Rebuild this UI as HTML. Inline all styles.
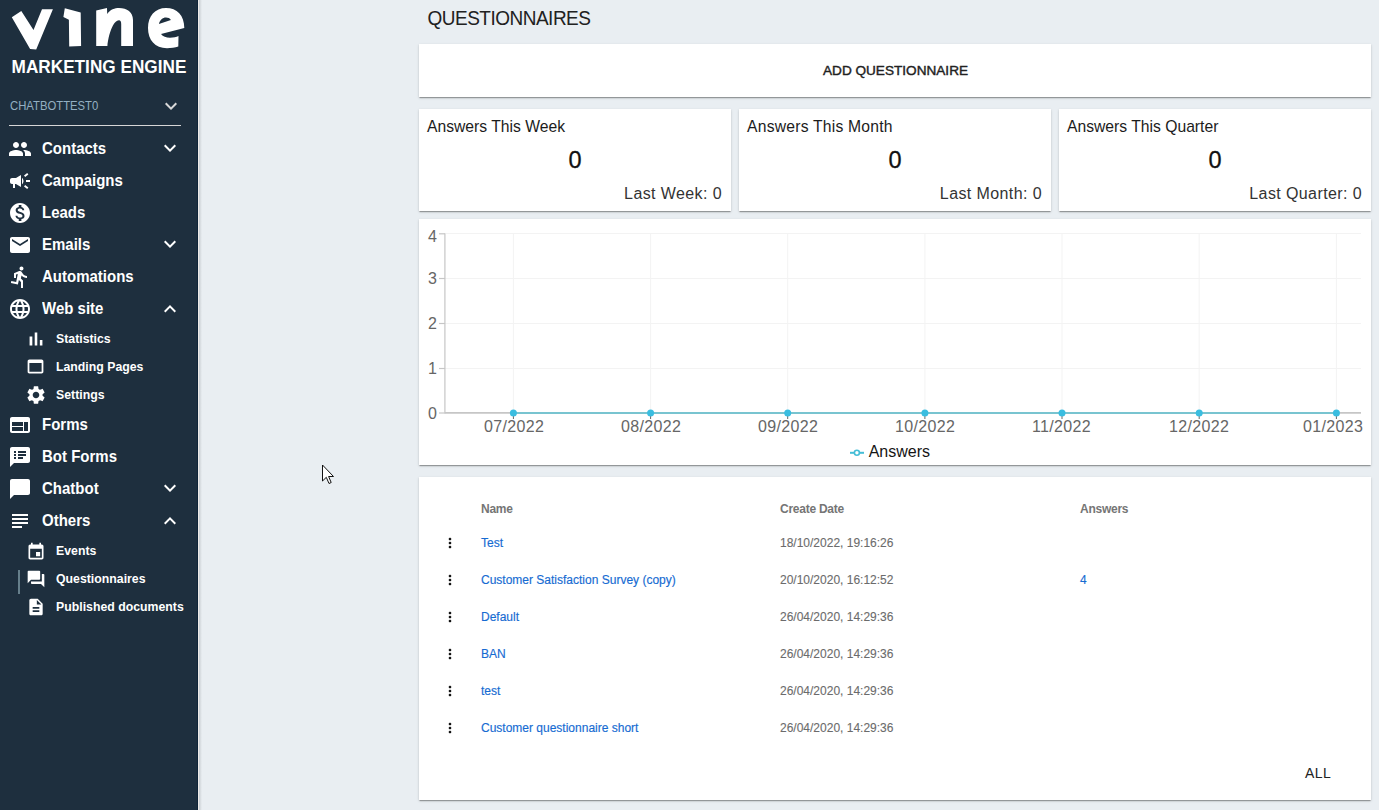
<!DOCTYPE html>
<html><head><meta charset="utf-8">
<style>
*{box-sizing:border-box;margin:0;padding:0}
html,body{width:1379px;height:810px;overflow:hidden;background:#e9eef2;font-family:"Liberation Sans",sans-serif}
.abs{position:absolute}
.t{position:absolute;white-space:nowrap;line-height:1}
#side{position:absolute;left:0;top:0;width:197px;height:810px;background:#1e2f3e}
#sideedge{position:absolute;left:197px;top:0;width:1px;height:810px;background:#0f2438}
#sideedge2{position:absolute;left:198px;top:0;width:1px;height:810px;background:#eeeae6}
#sideshadow{position:absolute;left:199px;top:0;width:3px;height:810px;background:linear-gradient(to right,#c9ced2,#e9eef2)}
.mi{position:absolute;left:42px;color:#fff;font-weight:bold;font-size:15px;transform:scaleY(1.15);transform-origin:0 12.7px}
.si{position:absolute;left:56px;color:#fff;font-weight:bold;font-size:12.3px;transform:scaleY(1.09);transform-origin:0 10.4px}
.ic{position:absolute;fill:#fff}
.card{position:absolute;background:#fff;border-radius:0;box-shadow:0px 2px 1px -1px rgba(0,0,0,0.2),0px 1px 1px 0px rgba(0,0,0,0.14),0px 1px 3px 0px rgba(0,0,0,0.12)}
.st{color:#1c1c1c;font-size:16px}
.big{color:#111;font-size:23.5px;-webkit-text-stroke:0.3px #111}
.lw{color:#333;font-size:16px;letter-spacing:0.4px}
.th{color:#757575;font-weight:bold;font-size:12px;letter-spacing:-0.25px}
.lk{color:#166bd2;font-size:12px;-webkit-text-stroke:0.15px #166bd2}
.dt{color:#6b6b6b;font-size:12px;-webkit-text-stroke:0.1px #6b6b6b}
.yl{color:#666;font-size:16px}
.xl{color:#666;font-size:16px;letter-spacing:0.35px}
</style></head><body>
<div id="side">
  <!-- logo -->
  <svg class="abs" style="left:0;top:0" width="197" height="55" viewBox="0 0 197 55">
    <path fill="#fff" d="M11.8 17.3 L21.3 10.9 L33.5 29.9 L42 9.2 L52.9 9.2 L36.2 49.6 L30.1 48.9 Z"/>
    <path fill="#fff" d="M64.8 8.2 L80.7 12.6 L81.1 45.9 L69.2 46.5 L68.9 19.7 L63.4 17 Z"/>
    <path fill="#fff" d="M96.2 10.5 L107 8 L107.2 14 C110 9.5 115 8 119 8 C127 8 133 12 133 20 L133 46 L121.2 46 L121.2 24 C121.2 21.5 120.5 20.3 119 20.3 C113 20.3 108.5 35 107.4 46 L96.2 46 Z"/>
    <path fill="#fff" d="M148 28 C148 16 155 8 166 8 C177 8 184.3 15 184.3 28 L161 34 C163 36.5 166 37.7 170 37.7 C173.5 37.7 176.5 37 178.5 36 L178.3 46.5 C175 47.8 171 48.2 167 48.2 C155 48.2 148 40 148 28 Z M158.9 23.9 L170.9 20 C169.8 18 168 17.4 166 17.4 C162.5 17.4 160 20 158.9 23.9 Z"/>
  </svg>
  <div class="t" style="left:11.6px;top:59.2px;color:#fff;font-weight:bold;font-size:17.2px;transform:scaleY(1.06);transform-origin:0 100%">MARKETING ENGINE</div>
  <div class="t" style="left:10px;top:101px;color:#94afc2;font-size:11.3px;transform:scaleY(1.1);transform-origin:0 9.6px">CHATBOTTEST0</div>
  <svg class="ic" style="left:159px;top:94px;fill:#d9d9d9" width="24" height="24" viewBox="0 0 24 24"><path d="M16.59 8.59L12 13.17 7.41 8.59 6 10l6 6 6-6z"/></svg>
  <div class="abs" style="left:9px;top:125px;width:172px;height:1px;background:#d6d6d6"></div>

  <!-- main items -->
  <svg class="ic" style="left:8px;top:137px" width="24" height="24" viewBox="0 0 24 24"><path d="M16 11c1.66 0 2.99-1.34 2.99-3S17.66 5 16 5c-1.66 0-3 1.34-3 3s1.34 3 3 3zm-8 0c1.66 0 2.99-1.34 2.99-3S9.66 5 8 5C6.34 5 5 6.34 5 8s1.34 3 3 3zm0 2c-2.33 0-7 1.17-7 3.5V19h14v-2.5c0-2.330-4.67-3.5-7-3.5zm8 0c-.29 0-.62.02-.97.05 1.16.84 1.97 1.97 1.97 3.45V19h6v-2.5c0-2.33-4.67-3.5-7-3.5z"/></svg>
  <div class="t mi" style="top:141px">Contacts</div>
  <svg class="ic" style="left:158px;top:136px" width="24" height="24" viewBox="0 0 24 24"><path d="M16.59 8.59L12 13.17 7.41 8.59 6 10l6 6 6-6z"/></svg>

  <svg class="ic" style="left:8px;top:169px" width="24" height="24" viewBox="0 0 24 24"><path d="M18 11v2h4v-2h-4zm-2 6.61c.96.71 2.21 1.65 3.2 2.39.4-.53.8-1.07 1.2-1.6-.99-.74-2.24-1.68-3.2-2.4-.4.54-.8 1.08-1.2 1.61zM20.4 5.6c-.4-.53-.8-1.070-1.2-1.6-.99.74-2.24 1.68-3.2 2.4.4.53.8 1.07 1.2 1.6.96-.72 2.21-1.65 3.2-2.4zM4 9c-1.1 0-2 .9-2 2v2c0 1.1.9 2 2 2h1v4h2v-4h1l5 3V6L8 9H4zm11.5 3c0-1.33-.58-2.53-1.5-3.35v6.69c.92-.81 1.5-2.010 1.5-3.34z"/></svg>
  <div class="t mi" style="top:173px">Campaigns</div>

  <svg class="ic" style="left:8px;top:201px" width="24" height="24" viewBox="0 0 24 24"><path d="M12 2C6.48 2 2 6.48 2 12s4.48 10 10 10 10-4.48 10-10S17.52 2 12 2zm1.41 16.09V20h-2.67v-1.93c-1.71-.36-3.16-1.46-3.27-3.4h1.96c.1 1.05.82 1.87 2.650 1.87 1.96 0 2.4-.98 2.4-1.59 0-.83-.44-1.61-2.67-2.14-2.48-.6-4.18-1.62-4.18-3.67 0-1.72 1.39-2.84 3.11-3.21V4h2.67v1.95c1.86.45 2.79 1.86 2.85 3.39H14.3c-.05-1.11-.64-1.87-2.22-1.87-1.5 0-2.4.68-2.4 1.64 0 .84.65 1.39 2.67 1.91s4.18 1.39 4.18 3.91c-.01 1.83-1.38 2.83-3.12 3.16z"/></svg>
  <div class="t mi" style="top:205px">Leads</div>

  <svg class="ic" style="left:8px;top:233px" width="24" height="24" viewBox="0 0 24 24"><path d="M20 4H4c-1.1 0-1.99.9-1.99 2L2 18c0 1.1.9 2 2 2h16c1.1 0 2-.9 2-2V6c0-1.1-.9-2-2-2zm0 4l-8 5-8-5V6l8 5 8-5v2z"/></svg>
  <div class="t mi" style="top:237px">Emails</div>
  <svg class="ic" style="left:158px;top:232px" width="24" height="24" viewBox="0 0 24 24"><path d="M16.59 8.59L12 13.17 7.41 8.59 6 10l6 6 6-6z"/></svg>

  <svg class="ic" style="left:8px;top:265px" width="24" height="24" viewBox="0 0 24 24"><path d="M13.49 5.48c1.1 0 2-.9 2-2s-.9-2-2-2-2 .9-2 2 .9 2 2 2zm-3.6 13.9l1-4.4 2.1 2v6h2v-7.5l-2.1-2 .6-3c1.3 1.5 3.3 2.5 5.5 2.5v-2c-1.9 0-3.5-1-4.3-2.4l-1-1.6c-.4-.6-1-1-1.7-1-.3 0-.5.1-.8.1l-5.2 2.2v4.7h2v-3.4l1.8-.7-1.6 8.1-4.9-1-.4 2 7 1.4z"/></svg>
  <div class="t mi" style="top:269px">Automations</div>

  <svg class="ic" style="left:8px;top:297px" width="24" height="24" viewBox="0 0 24 24"><path d="M11.99 2C6.47 2 2 6.48 2 12s4.47 10 9.99 10C17.52 22 22 17.52 22 12S17.52 2 11.99 2zm6.93 6h-2.95c-.32-1.25-.78-2.45-1.38-3.56 1.84.63 3.37 1.91 4.33 3.56zM12 4.04c.83 1.2 1.48 2.53 1.91 3.96h-3.82c.43-1.43 1.08-2.76 1.91-3.96zM4.26 14C4.1 13.36 4 12.69 4 12s.1-1.36.26-2h3.38c-.08.66-.14 1.32-.14 2 0 .68.06 1.34.14 2H4.26zm.82 2h2.95c.32 1.25.78 2.45 1.38 3.56-1.84-.63-3.37-1.9-4.33-3.56zm2.95-8H5.08c.96-1.66 2.49-2.93 4.33-3.56C8.81 5.55 8.35 6.75 8.03 8zM12 19.96c-.83-1.2-1.48-2.53-1.91-3.96h3.82c-.43 1.43-1.08 2.76-1.91 3.96zM14.34 14H9.66c-.09-.66-.16-1.32-.16-2 0-.68.07-1.35.16-2h4.68c.09.65.16 1.32.16 2 0 .68-.07 1.34-.16 2zm.25 5.56c.6-1.11 1.06-2.31 1.38-3.56h2.95c-.96 1.65-2.49 2.93-4.33 3.56zM16.36 14c.08-.66.14-1.32.14-2 0-.68-.06-1.34-.14-2h3.38c.16.64.26 1.31.26 2s-.1 1.36-.26 2h-3.38z"/></svg>
  <div class="t mi" style="top:301px">Web site</div>
  <svg class="ic" style="left:158px;top:297px" width="24" height="24" viewBox="0 0 24 24"><path d="M12 8l-6 6 1.41 1.41L12 10.83l4.59 4.58L18 14z"/></svg>

  <svg class="ic" style="left:25px;top:328px" width="22" height="22" viewBox="0 0 24 24"><path d="M5 9.2h3V19H5zM10.6 5h2.8v14h-2.8zm5.6 8H19v6h-2.8z"/></svg>
  <div class="t si" style="top:333px">Statistics</div>
  <svg class="ic" style="left:25px;top:356px" width="21" height="21" viewBox="0 0 24 24"><path d="M19 4H5c-1.11 0-2 .9-2 2v12c0 1.1.89 2 2 2h14c1.1 0 2-.9 2-2V6c0-1.1-.89-2-2-2zm0 14H5V8h14v10z"/></svg>
  <div class="t si" style="top:361px">Landing Pages</div>
  <svg class="ic" style="left:25px;top:384px" width="22" height="22" viewBox="0 0 24 24"><path d="M19.14 12.94c.04-.3.06-.61.06-.94 0-.32-.02-.64-.07-.94l2.03-1.58c.18-.14.23-.41.12-.61l-1.92-3.32c-.12-.22-.37-.29-.59-.22l-2.39.96c-.5-.38-1.03-.7-1.62-.94l-.36-2.54c-.04-.24-.24-.41-.48-.41h-3.84c-.24 0-.43.17-.47.41l-.36 2.54c-.59.24-1.13.57-1.62.94l-2.39-.96c-.22-.08-.47 0-.59.22L2.74 8.870c-.12.21-.08.47.12.61l2.03 1.58c-.05.3-.09.63-.09.94s.02.64.07.94l-2.03 1.58c-.18.14-.23.41-.12.61l1.92 3.32c.12.22.37.29.59.22l2.39-.96c.5.38 1.03.7 1.62.94l.36 2.54c.05.24.24.41.48.41h3.84c.24 0 .44-.17.47-.41l.36-2.54c.59-.24 1.13-.56 1.62-.94l2.39.96c.22.08.47 0 .59-.22l1.92-3.32c.12-.22.07-.47-.12-.61l-2.01-1.58zM12 15.6c-1.98 0-3.6-1.62-3.6-3.6s1.62-3.6 3.6-3.6 3.6 1.62 3.6 3.6-1.62 3.6-3.6 3.6z"/></svg>
  <div class="t si" style="top:389px">Settings</div>

  <svg class="ic" style="left:8px;top:413px" width="24" height="24" viewBox="0 0 24 24"><path d="M20 4H4c-1.1 0-1.99.9-1.99 2L2 18c0 1.1.9 2 2 2h16c1.1 0 2-.9 2-2V6c0-1.1-.9-2-2-2zm-5 14H4v-4h11v4zm0-5H4V9h11v4zm5 5h-4V9h4v9z"/></svg>
  <div class="t mi" style="top:417px">Forms</div>
  <svg class="ic" style="left:8px;top:445px" width="24" height="24" viewBox="0 0 24 24"><path d="M20 2H4c-1.1 0-1.99.9-1.99 2L2 22l4-4h14c1.1 0 2-.9 2-2V4c0-1.1-.9-2-2-2zM8 14H6v-2h2v2zm0-3H6V9h2v2zm0-3H6V6h2v2zm7 6h-5v-2h5v2zm3-3h-8V9h8v2zm0-3h-8V6h8v2z"/></svg>
  <div class="t mi" style="top:449px">Bot Forms</div>
  <svg class="ic" style="left:8px;top:477px" width="24" height="24" viewBox="0 0 24 24"><path d="M20 2H4c-1.1 0-2 .9-2 2v18l4-4h14c1.1 0 2-.9 2-2V4c0-1.1-.9-2-2-2z"/></svg>
  <div class="t mi" style="top:481px">Chatbot</div>
  <svg class="ic" style="left:158px;top:476px" width="24" height="24" viewBox="0 0 24 24"><path d="M16.59 8.59L12 13.17 7.41 8.59 6 10l6 6 6-6z"/></svg>
  <svg class="ic" style="left:8px;top:509px" width="24" height="24" viewBox="0 0 24 24"><path d="M14 17H4v2h10v-2zm6-8H4v2h16V9zM4 15h16v-2H4v2zM4 5v2h16V5H4z"/></svg>
  <div class="t mi" style="top:513px">Others</div>
  <svg class="ic" style="left:158px;top:509px" width="24" height="24" viewBox="0 0 24 24"><path d="M12 8l-6 6 1.41 1.41L12 10.83l4.59 4.58L18 14z"/></svg>

  <svg class="ic" style="left:26.2px;top:541.5px" width="20" height="20" viewBox="0 0 24 24"><path d="M17 12h-5v5h5v-5zM16 1v2H8V1H6v2H5c-1.11 0-1.99.9-1.99 2L3 19c0 1.1.89 2 2 2h14c1.1 0 2-.9 2-2V5c0-1.1-.9-2-2-2h-1V1h-2zm3 18H5V8h14v11z"/></svg>
  <div class="t si" style="top:545px">Events</div>
  <div class="abs" style="left:18px;top:570px;width:2px;height:24px;background:#667f8b"></div>
  <svg class="ic" style="left:25.9px;top:569px" width="20" height="20" viewBox="0 0 24 24"><path d="M21 6h-2v9H6v2c0 .55.45 1 1 1h11l4 4V7c0-.55-.45-1-1-1zm-4 6V3c0-.55-.45-1-1-1H3c-.55 0-1 .45-1 1v14l4-4h10c.55 0 1-.45 1-1z"/></svg>
  <div class="t si" style="top:573px">Questionnaires</div>
  <svg class="ic" style="left:26.2px;top:597.2px" width="20" height="20" viewBox="0 0 24 24"><path d="M14 2H6c-1.1 0-1.99.9-1.99 2L4 20c0 1.1.89 2 1.99 2H18c1.1 0 2-.9 2-2V8l-6-6zm2 16H8v-2h8v2zm0-4H8v-2h8v2zm-3-5V3.5L18.5 9H13z"/></svg>
  <div class="t si" style="top:601px">Published documents</div>
</div>
<div id="sideedge"></div><div id="sideedge2"></div><div id="sideshadow"></div>

<!-- main -->
<div class="t" style="left:427.5px;top:8.6px;color:#212121;font-size:19px;letter-spacing:-0.5px;transform:scaleY(1.05);transform-origin:0 16.1px">QUESTIONNAIRES</div>

<div class="card" style="left:419px;top:44px;width:952px;height:53px"></div>
<div class="t" style="left:823px;top:64.1px;color:#212121;font-size:13.6px;-webkit-text-stroke:0.4px #212121">ADD QUESTIONNAIRE</div>

<div class="card" style="left:419px;top:109px;width:312px;height:102px"></div>
<div class="card" style="left:739px;top:109px;width:312px;height:102px"></div>
<div class="card" style="left:1059px;top:109px;width:312px;height:102px"></div>
<div class="t st" style="left:427px;top:119px;font-size:15.7px">Answers This Week</div>
<div class="t st" style="left:747px;top:119px;font-size:15.7px;letter-spacing:0.22px">Answers This Month</div>
<div class="t st" style="left:1067px;top:119px;font-size:15.7px">Answers This Quarter</div>
<div class="t big" style="left:568.5px;top:149.1px">0</div>
<div class="t big" style="left:888.5px;top:149.1px">0</div>
<div class="t big" style="left:1208.5px;top:149.1px">0</div>
<div class="t lw" style="right:657px;top:186px">Last Week: 0</div>
<div class="t lw" style="right:337px;top:186px">Last Month: 0</div>
<div class="t lw" style="right:17px;top:186px">Last Quarter: 0</div>

<div class="card" style="left:419px;top:219px;width:952px;height:246px"></div>
<svg class="abs" style="left:0;top:0" width="1379" height="810">
  <g stroke="#f3f3f3" stroke-width="1">
    <line x1="445" y1="233.5" x2="1361" y2="233.5"/>
    <line x1="445" y1="278.5" x2="1361" y2="278.5"/>
    <line x1="445" y1="323.5" x2="1361" y2="323.5"/>
    <line x1="445" y1="368.5" x2="1361" y2="368.5"/>
    <line x1="513.4" y1="233" x2="513.4" y2="413"/>
    <line x1="650.6" y1="233" x2="650.6" y2="413"/>
    <line x1="787.7" y1="233" x2="787.7" y2="413"/>
    <line x1="924.9" y1="233" x2="924.9" y2="413"/>
    <line x1="1062.0" y1="233" x2="1062.0" y2="413"/>
    <line x1="1199.2" y1="233" x2="1199.2" y2="413"/>
    <line x1="1336.4" y1="233" x2="1336.4" y2="413"/>
  </g>
  <g stroke="#c6c6c6" stroke-width="1.2">
    <line x1="444.9" y1="233.5" x2="444.9" y2="413.5"/>
    <line x1="445" y1="412.9" x2="1361" y2="412.9" stroke-width="1.6"/>
    <line x1="439" y1="233.8" x2="445" y2="233.8"/>
    <line x1="439" y1="278.5" x2="445" y2="278.5"/>
    <line x1="439" y1="323.5" x2="445" y2="323.5"/>
    <line x1="439" y1="368.5" x2="445" y2="368.5"/>
    <line x1="439" y1="413" x2="445" y2="413"/>
  </g>
  <g stroke="#666" stroke-width="1">
    <line x1="513.4" y1="413" x2="513.4" y2="419"/><line x1="650.6" y1="413" x2="650.6" y2="419"/><line x1="787.7" y1="413" x2="787.7" y2="419"/><line x1="924.9" y1="413" x2="924.9" y2="419"/><line x1="1062.0" y1="413" x2="1062.0" y2="419"/><line x1="1199.2" y1="413" x2="1199.2" y2="419"/><line x1="1336.4" y1="413" x2="1336.4" y2="419"/>
  </g>
  <line x1="513.4" y1="413" x2="1336.4" y2="413" stroke="#78c4d0" stroke-width="1.9"/>
  <g fill="#3abde0">
    <circle cx="513.4" cy="413" r="3.5"/><circle cx="650.6" cy="413" r="3.5"/><circle cx="787.7" cy="413" r="3.5"/><circle cx="924.9" cy="413" r="3.5"/><circle cx="1062.0" cy="413" r="3.5"/><circle cx="1199.2" cy="413" r="3.5"/><circle cx="1336.4" cy="413" r="3.5"/>
  </g>
  <line x1="850" y1="452.8" x2="864" y2="452.8" stroke="#45bdd6" stroke-width="2"/>
  <circle cx="856.9" cy="452.8" r="2.5" fill="#fff" stroke="#45bdd6" stroke-width="1.6"/>
</svg>
<div class="t yl" style="left:428px;top:229px">4</div>
<div class="t yl" style="left:428px;top:271px">3</div>
<div class="t yl" style="left:428px;top:316px">2</div>
<div class="t yl" style="left:428px;top:361px">1</div>
<div class="t yl" style="left:428px;top:406px">0</div>
<div class="t xl" style="left:484px;top:419px">07/2022</div>
<div class="t xl" style="left:621px;top:419px">08/2022</div>
<div class="t xl" style="left:758px;top:419px">09/2022</div>
<div class="t xl" style="left:895px;top:419px">10/2022</div>
<div class="t xl" style="left:1032px;top:419px">11/2022</div>
<div class="t xl" style="left:1169px;top:419px">12/2022</div>
<div class="t xl" style="left:1303px;top:419px">01/2023</div>
<div class="t" style="left:868.7px;top:444px;color:#151515;font-size:16px">Answers</div>

<div class="card" style="left:419px;top:477px;width:952px;height:323px"></div>
<div class="t th" style="left:481px;top:503px">Name</div>
<div class="t th" style="left:780px;top:503px">Create Date</div>
<div class="t th" style="left:1080px;top:503px">Answers</div>

<svg class="abs" style="left:442px;top:534.8px" width="16" height="16" viewBox="0 0 24 24"><path fill="#111" d="M12 8c1.1 0 2-.9 2-2s-.9-2-2-2-2 .9-2 2 .9 2 2 2zm0 2c-1.1 0-2 .9-2 2s.9 2 2 2 2-.9 2-2-.9-2-2-2zm0 6c-1.1 0-2 .9-2 2s.9 2 2 2 2-.9 2-2-.9-2-2-2z"/></svg>
<div class="t lk" style="left:481px;top:537.1px">Test</div>
<div class="t dt" style="left:780px;top:537.1px">18/10/2022, 19:16:26</div>
<svg class="abs" style="left:442px;top:571.8px" width="16" height="16" viewBox="0 0 24 24"><path fill="#111" d="M12 8c1.1 0 2-.9 2-2s-.9-2-2-2-2 .9-2 2 .9 2 2 2zm0 2c-1.1 0-2 .9-2 2s.9 2 2 2 2-.9 2-2-.9-2-2-2zm0 6c-1.1 0-2 .9-2 2s.9 2 2 2 2-.9 2-2-.9-2-2-2z"/></svg>
<div class="t lk" style="left:481px;top:574.1px">Customer Satisfaction Survey (copy)</div>
<div class="t dt" style="left:780px;top:574.1px">20/10/2020, 16:12:52</div>
<div class="t lk" style="left:1080px;top:574.1px">4</div>
<svg class="abs" style="left:442px;top:608.8px" width="16" height="16" viewBox="0 0 24 24"><path fill="#111" d="M12 8c1.1 0 2-.9 2-2s-.9-2-2-2-2 .9-2 2 .9 2 2 2zm0 2c-1.1 0-2 .9-2 2s.9 2 2 2 2-.9 2-2-.9-2-2-2zm0 6c-1.1 0-2 .9-2 2s.9 2 2 2 2-.9 2-2-.9-2-2-2z"/></svg>
<div class="t lk" style="left:481px;top:611.1px">Default</div>
<div class="t dt" style="left:780px;top:611.1px">26/04/2020, 14:29:36</div>
<svg class="abs" style="left:442px;top:645.8px" width="16" height="16" viewBox="0 0 24 24"><path fill="#111" d="M12 8c1.1 0 2-.9 2-2s-.9-2-2-2-2 .9-2 2 .9 2 2 2zm0 2c-1.1 0-2 .9-2 2s.9 2 2 2 2-.9 2-2-.9-2-2-2zm0 6c-1.1 0-2 .9-2 2s.9 2 2 2 2-.9 2-2-.9-2-2-2z"/></svg>
<div class="t lk" style="left:481px;top:648.1px">BAN</div>
<div class="t dt" style="left:780px;top:648.1px">26/04/2020, 14:29:36</div>
<svg class="abs" style="left:442px;top:682.8px" width="16" height="16" viewBox="0 0 24 24"><path fill="#111" d="M12 8c1.1 0 2-.9 2-2s-.9-2-2-2-2 .9-2 2 .9 2 2 2zm0 2c-1.1 0-2 .9-2 2s.9 2 2 2 2-.9 2-2-.9-2-2-2zm0 6c-1.1 0-2 .9-2 2s.9 2 2 2 2-.9 2-2-.9-2-2-2z"/></svg>
<div class="t lk" style="left:481px;top:685.1px">test</div>
<div class="t dt" style="left:780px;top:685.1px">26/04/2020, 14:29:36</div>
<svg class="abs" style="left:442px;top:719.8px" width="16" height="16" viewBox="0 0 24 24"><path fill="#111" d="M12 8c1.1 0 2-.9 2-2s-.9-2-2-2-2 .9-2 2 .9 2 2 2zm0 2c-1.1 0-2 .9-2 2s.9 2 2 2 2-.9 2-2-.9-2-2-2zm0 6c-1.1 0-2 .9-2 2s.9 2 2 2 2-.9 2-2-.9-2-2-2z"/></svg>
<div class="t lk" style="left:481px;top:722.1px">Customer questionnaire short</div>
<div class="t dt" style="left:780px;top:722.1px">26/04/2020, 14:29:36</div>
<div class="t" style="left:1305px;top:766px;color:#222;font-size:14px;letter-spacing:0.4px">ALL</div>

<!-- cursor -->
<svg class="abs" style="left:320px;top:462.8px" width="16" height="22" viewBox="0 0 16 22">
  <path d="M2.5 2 L2.5 18 L6.3 14.3 L9 20.5 L11.2 19.5 L8.6 13.5 L13.5 13.5 Z" fill="#fff" stroke="#111" stroke-width="1" stroke-linejoin="round"/>
</svg>
</body></html>
